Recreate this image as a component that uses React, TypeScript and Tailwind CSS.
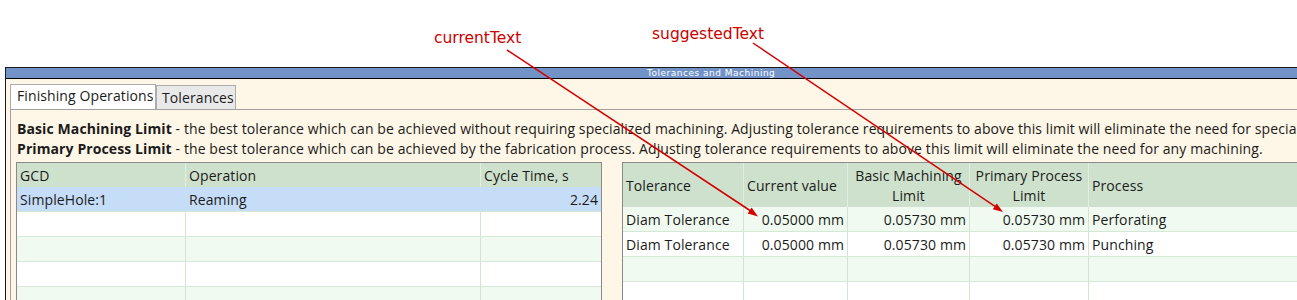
import React from 'react';

type Row = string[];

const ui = { fontFamily: '"Open Sans", "Noto Sans", sans-serif' };

const leftRows: Row[] = [['SimpleHole:1', 'Reaming', '2.24'], ['', '', ''], ['', '', ''], ['', '', ''], ['', '', '']];

const rightRows: Row[] = [
  ['Diam Tolerance', '0.05000 mm', '0.05730 mm', '0.05730 mm', 'Perforating'],
  ['Diam Tolerance', '0.05000 mm', '0.05730 mm', '0.05730 mm', 'Punching'],
  ['', '', '', '', ''],
  ['', '', '', '', ''],
];

const leftCols = ['w-[169px]', 'w-[295px]', 'flex-1'];
const rightCols = ['w-[121px]', 'w-[104px]', 'w-[122px]', 'w-[119px]', 'flex-1'];

const rowBg = (i: number, selected: boolean) => {
  if (selected) return 'bg-[#C6DDF8]';
  return i % 2 === 0 ? 'bg-[#F0FAF0]' : 'bg-white';
};

const Annotations = () => (
  <>
    <span
      className="absolute left-[434px] top-[31px] text-[15.5px] leading-none text-[#CC0000] whitespace-nowrap"
      style={{ fontFamily: '"DejaVu Sans", sans-serif' }}
    >
      currentText
    </span>
    <span
      className="absolute left-[652px] top-[27px] text-[15.5px] leading-none text-[#CC0000] whitespace-nowrap"
      style={{ fontFamily: '"DejaVu Sans", sans-serif' }}
    >
      suggestedText
    </span>
    <svg className="absolute left-0 top-0 pointer-events-none" width="1297" height="300">
      <line x1="507" y1="50" x2="750" y2="210.5" stroke="#D40000" strokeWidth="1.5" />
      <polygon points="758,216.5 747.7,213.4 751.6,207.6" fill="#D40000" />
      <line x1="753" y1="43" x2="995" y2="206.4" stroke="#D40000" strokeWidth="1.5" />
      <polygon points="1003,212 992.8,209.3 996.7,203.5" fill="#D40000" />
    </svg>
  </>
);

const LeftTable = () => (
  <div className="w-[586px] h-[200px] border border-[#8A8A8A] bg-white shrink-0">
    <div className="flex h-[24px] bg-[#CDE1CD]">
      {['GCD', 'Operation', 'Cycle Time, s'].map((h, c) => (
        <div
          key={h}
          className={`${leftCols[c]} flex items-center pl-[3px] pt-[1px] ${c < 2 ? 'border-r border-[#E2EEE2]' : ''}`}
        >
          {h}
        </div>
      ))}
    </div>
    {leftRows.map((r, i) => (
      <div key={i} className={`flex h-[25px] border-b border-[#D5E8D5] ${rowBg(i, i === 0)}`}>
        {r.map((v, c) => (
          <div
            key={c}
            className={`${leftCols[c]} flex items-center px-[3px] pt-[2px] ${c === 2 ? 'justify-end' : ''} ${
              c < 2 ? (i === 0 ? 'border-r border-[#C6DDF8]' : 'border-r border-[#D5E3D5]') : ''
            }`}
          >
            {v}
          </div>
        ))}
      </div>
    ))}
  </div>
);

const RightTable = () => (
  <div className="w-[760px] h-[200px] border border-[#8A8A8A] bg-white shrink-0">
    <div className="flex h-[44px] bg-[#CDE1CD]">
      {['Tolerance', 'Current value', 'Basic Machining Limit', 'Primary Process Limit', 'Process'].map((h, c) => (
        <div
          key={h}
          className={`${rightCols[c]} flex items-center px-[3px] pt-[2px] whitespace-nowrap ${
            c === 2 || c === 3 ? 'justify-center text-center' : ''
          } ${c < 4 ? 'border-r border-[#E2EEE2]' : ''}`}
        >
          {c === 2 ? (
            <span>
              Basic Machining
              <br />
              Limit
            </span>
          ) : c === 3 ? (
            <span>
              Primary Process
              <br />
              Limit
            </span>
          ) : (
            h
          )}
        </div>
      ))}
    </div>
    {rightRows.map((r, i) => (
      <div key={i} className={`flex h-[25px] border-b border-[#D5E8D5] ${rowBg(i, false)}`}>
        {r.map((v, c) => (
          <div
            key={c}
            className={`${rightCols[c]} flex items-center px-[3px] pt-[2px] whitespace-nowrap ${
              c >= 1 && c <= 3 ? 'justify-end' : ''
            } ${c < 4 ? 'border-r border-[#D5E3D5]' : ''}`}
          >
            {v}
          </div>
        ))}
      </div>
    ))}
  </div>
);

const App: React.FC = (): JSX.Element => {
  return (
    <div className="relative w-[1297px] h-[300px] overflow-hidden bg-white text-[#1b1b1b]" style={ui}>
      <div className="h-[67px]" />
      <div className="ml-[5px] h-[233px] border-l border-t border-[#1a1a1a] bg-[#FEF6E6]">
        <div
          className="h-[11px] bg-[#7193C7] border-b border-black pl-[641px] text-[9px] leading-[10px] tracking-[0.5px] text-white whitespace-nowrap"
          style={{ fontFamily: '"DejaVu Sans", sans-serif' }}
        >
          Tolerances and Machining
        </div>
        <div className="pl-[4px] pt-[5px] text-[14px] tracking-[0.1px] leading-[20px]">
          <div className="flex items-end h-[25px]">
            <div className="w-[146px] h-[25px] bg-white border border-b-0 border-[#ACACAC] pl-[6px] pt-[1px] whitespace-nowrap">
              Finishing Operations
            </div>
            <div className="w-[80px] h-[24px] bg-[#E9E9E9] border border-b-0 border-[#ACACAC] pl-[5px] pt-[2px] whitespace-nowrap">
              Tolerances
            </div>
          </div>
          <div className="h-[200px] border-t border-l border-[#A0A0A0] pt-[9px] pl-[5px]">
            <div className="pl-[1px] whitespace-nowrap">
              <div>
                <b className="font-bold">Basic Machining Limit</b> - the best tolerance which can be achieved without requiring
                specialized machining. Adjusting tolerance requirements to above this limit will eliminate the need for
                specialized machining.
              </div>
              <div>
                <b className="font-bold">Primary Process Limit</b> - the best tolerance which can be achieved by the fabrication
                process. Adjusting tolerance requirements to above this limit will eliminate the need for any machining.
              </div>
            </div>
            <div className="flex gap-[20px] mt-[3px]">
              <LeftTable />
              <RightTable />
            </div>
          </div>
        </div>
      </div>
      <Annotations />
    </div>
  );
};

export default App;
